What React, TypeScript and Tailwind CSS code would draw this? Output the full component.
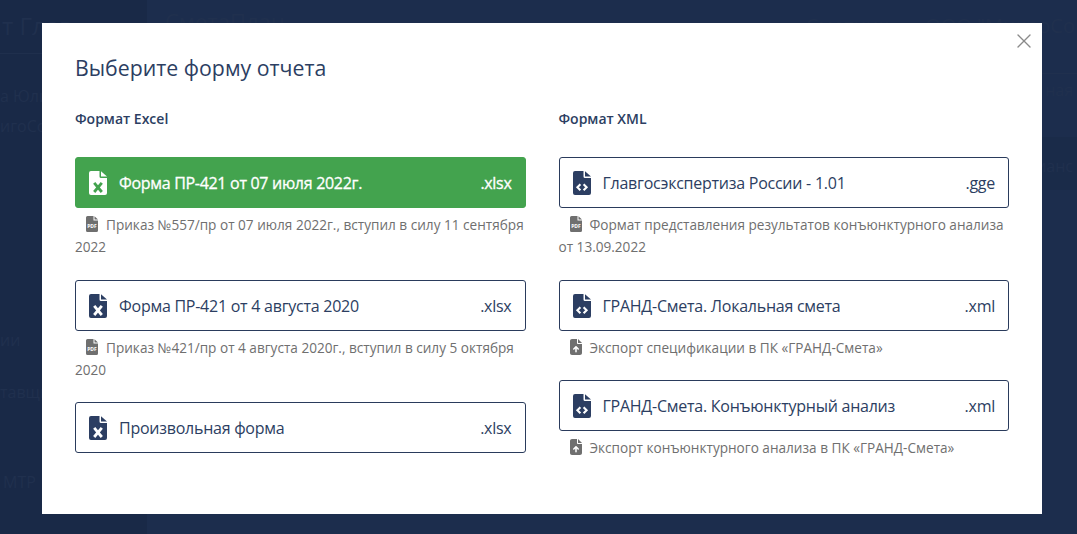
import { FaFileArrowUp } from "react-icons/fa6";
import { X } from "lucide-react";
import type { ReactNode } from "react";

function PdfIcon() {
  return (
    <svg width="12" height="16" viewBox="0 0 12 16" className="text-[#6f6f6f]">
      <path d="M1.5 0H7.5V4.5H12V14.5A1.5 1.5 0 0 1 10.5 16H1.5A1.5 1.5 0 0 1 0 14.5V1.5A1.5 1.5 0 0 1 1.5 0Z" fill="currentColor" />
      <path d="M8.5 0.2L12 3.6H8.5Z" fill="currentColor" />
      <text x="6" y="12.2" textAnchor="middle" fontSize="5" fontWeight="700" fill="#fff">PDF</text>
    </svg>
  );
}

// file sheet with a detached folded corner, the mark is drawn in `cut`
function FileIcon({ kind, cut = "#fff" }: { kind: "excel" | "code"; cut?: string }) {
  return (
    <svg width="18" height="24" viewBox="0 0 18 24" fill="currentColor">
      <path d="M2 0H10.5V5.5A1.5 1.5 0 0 0 12 7H18V22A2 2 0 0 1 16 24H2A2 2 0 0 1 0 22V2A2 2 0 0 1 2 0Z" />
      <path d="M12 0.2L18 5.6H12Z" />
      {kind === "excel" ? (
        <path d="M5.2 11.8L12.8 21M12.8 11.8L5.2 21" stroke={cut} strokeWidth="2.8" fill="none" />
      ) : (
        <path d="M7.4 13.2L4.4 16.2L7.4 19.2M10.6 13.2L13.6 16.2L10.6 19.2" stroke={cut} strokeWidth="2.1" fill="none" />
      )}
    </svg>
  );
}

function FormatButton({
  icon,
  title,
  ext,
  active,
}: {
  icon: ReactNode;
  title: string;
  ext: string;
  active?: boolean;
}) {
  return (
    <button
      className={
        active
          ? "flex h-[51px] w-full items-center rounded-[3px] border border-[#43a34e] bg-[#43a34e] pl-[13px] pr-[13px] text-[16px] font-medium tracking-[-0.3px] text-white [-webkit-text-stroke:0.3px_#fff]"
          : "flex h-[51px] w-full items-center rounded-[3px] border border-[#2a3b5c] bg-white pl-[13px] pr-[13px] text-[16px] tracking-[-0.25px] text-[#2c3e62]"
      }
    >
      <span className="w-[30px] shrink-0">{icon}</span>
      <span>{title}</span>
      <span className="ml-auto font-normal">{ext}</span>
    </button>
  );
}

function Note({ icon, children }: { icon: ReactNode; children: ReactNode }) {
  return (
    <p className="mt-[6px] text-[13.6px] leading-[22px] text-[#6f6f6f]">
      <span className="ml-[11px] mr-[8px] inline-block align-[-2px]">{icon}</span>
      {children}
    </p>
  );
}

const upIcon = "h-[16px] w-[12px] text-[#6f6f6f]";

export default function App() {
  return (
    <div className="relative h-[534px] w-[1077px] overflow-hidden bg-[#1c2d4d] font-['Open_Sans','Noto_Sans',sans-serif]">
      {/* dimmed page behind the modal */}
      <div className="flex h-full text-[#20304e]">
        <aside className="w-[147px] shrink-0 bg-[#192947] text-[16px]">
          <div className="h-[54px] whitespace-nowrap border-b border-[#1f2f4d] pl-[2px] pt-[8px] text-[24px]">т Глав</div>
          <div className="mt-[31px] whitespace-nowrap leading-[22px]">а Юлия</div>
          <div className="mt-[8px] whitespace-nowrap leading-[22px]">игоСос</div>
          <div className="mt-[192px] whitespace-nowrap leading-[22px]">ии</div>
          <div className="mt-[30px] whitespace-nowrap leading-[22px]">тавщи</div>
          <div className="mt-[68px] whitespace-nowrap pl-[3px] leading-[22px]">МТР</div>
        </aside>
        <main className="flex-1">
          <div className="flex h-[74px] items-start justify-between border-b border-[#20304e] pl-[18px] pt-[5px] text-[20px]">
            <span className="text-[22px]">СметаПлан</span>
            <span className="whitespace-nowrap pr-[2px] pt-[6px]">Сметчик &nbsp; &nbsp; &nbsp; ООО "МикроСо</span>
          </div>
          <div className="h-[63px] pr-[4px] pt-[4px] text-right text-[16px]">ная</div>
          <div className="h-[53px] bg-[#1a2b49] pr-[4px] pt-[17px] text-right text-[16px]">ианс</div>
        </main>
      </div>

      <div className="absolute left-[42px] top-[23px] h-[491px] w-[1000px] bg-white px-[33px] pt-[30px]">
        <button className="absolute right-[6px] top-[6px] text-[#8a8a8a]">
          <X size={24} strokeWidth={1.4} />
        </button>
        <h2 className="text-[21.3px] leading-[30px] text-[#2c3e62]">Выберите форму отчета</h2>

        <div className="mt-[27px] grid grid-cols-2 gap-x-[33px]">
          <section>
            <h3 className="mb-[29px] text-[14px] font-semibold leading-[18px] text-[#2c3e62]">Формат Excel</h3>
            <FormatButton
              active
              icon={<FileIcon kind="excel" cut="#43a34e" />}
              title="Форма ПР-421 от 07 июля 2022г."
              ext=".xlsx"
            />
            <Note icon={<PdfIcon />}>
              Приказ №557/пр от 07 июля 2022г., вступил в силу 11 сентября 2022
            </Note>
            <div className="mt-[22px]">
              <FormatButton icon={<FileIcon kind="excel" />} title="Форма ПР-421 от 4 августа 2020" ext=".xlsx" />
            </div>
            <Note icon={<PdfIcon />}>
              Приказ №421/пр от 4 августа 2020г., вступил в силу 5 октября 2020
            </Note>
            <div className="mt-[21px]">
              <FormatButton icon={<FileIcon kind="excel" />} title="Произвольная форма" ext=".xlsx" />
            </div>
          </section>

          <section>
            <h3 className="mb-[29px] text-[14px] font-semibold leading-[18px] text-[#2c3e62]">Формат XML</h3>
            <FormatButton icon={<FileIcon kind="code" />} title="Главгосэкспертиза России - 1.01" ext=".gge" />
            <Note icon={<PdfIcon />}>
              Формат представления результатов конъюнктурного анализа от 13.09.2022
            </Note>
            <div className="mt-[22px]">
              <FormatButton icon={<FileIcon kind="code" />} title="ГРАНД-Смета. Локальная смета" ext=".xml" />
            </div>
            <Note icon={<FaFileArrowUp className={upIcon} />}>
              Экспорт спецификации в ПК «ГРАНД-Смета»
            </Note>
            <div className="mt-[21px]">
              <FormatButton icon={<FileIcon kind="code" />} title="ГРАНД-Смета. Конъюнктурный анализ" ext=".xml" />
            </div>
            <Note icon={<FaFileArrowUp className={upIcon} />}>
              Экспорт конъюнктурного анализа в ПК «ГРАНД-Смета»
            </Note>
          </section>
        </div>
      </div>
    </div>
  );
}
